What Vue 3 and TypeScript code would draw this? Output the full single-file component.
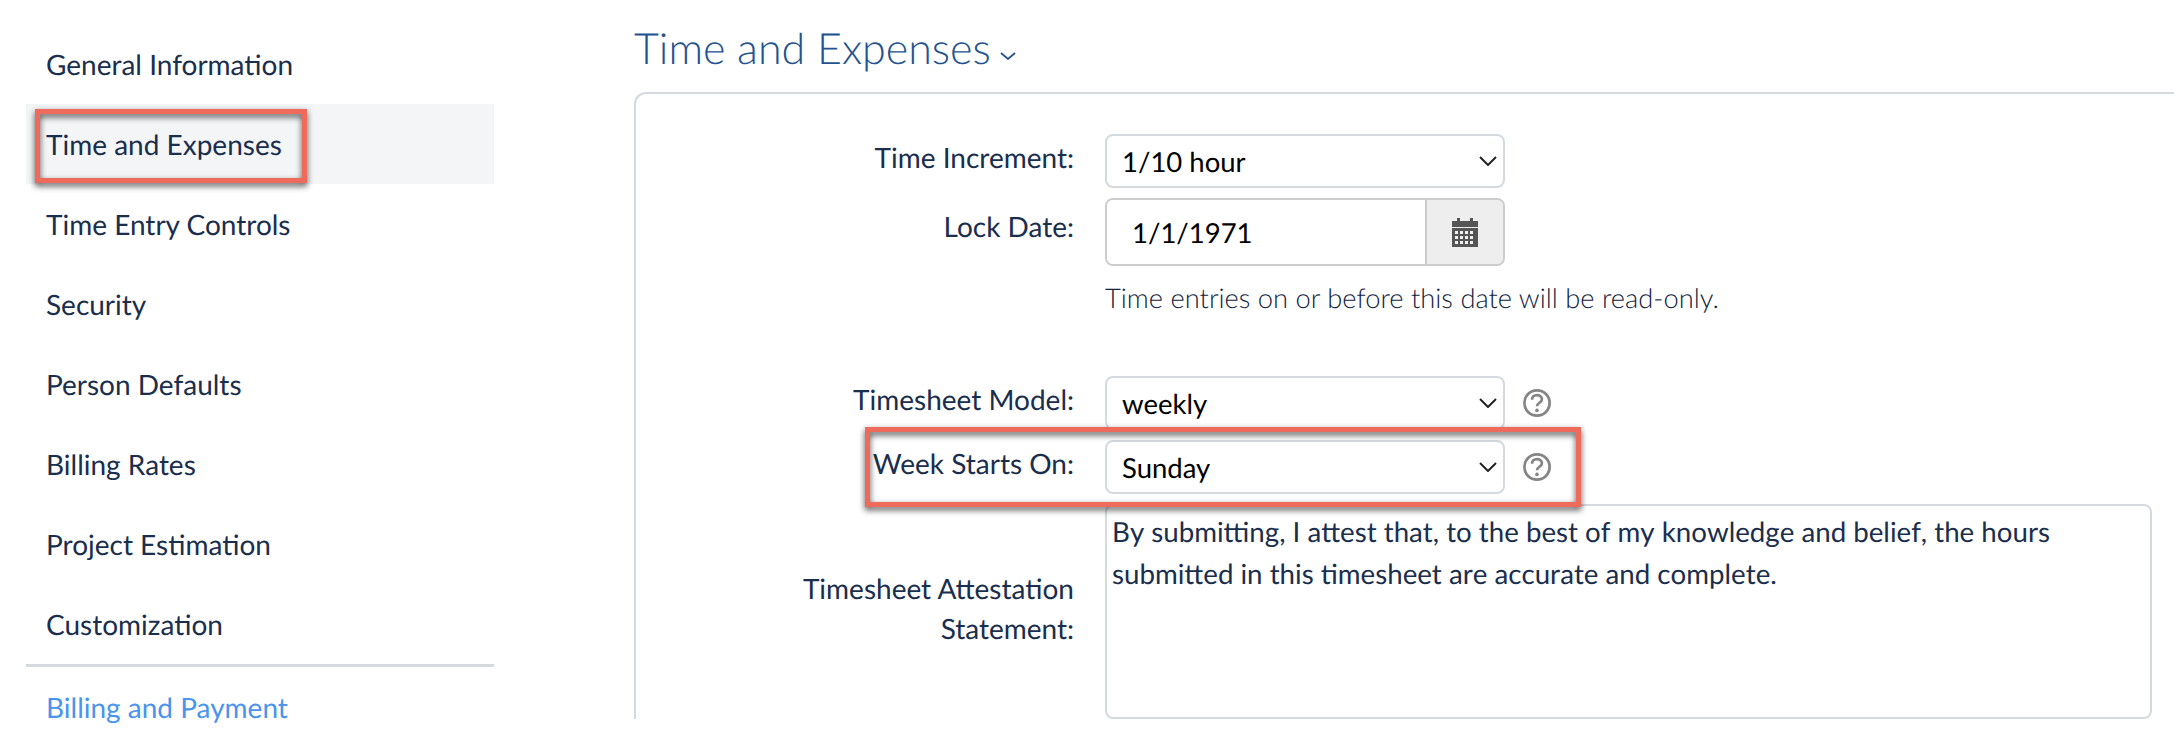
<script setup lang="ts">
const navItems: string[] = [
  'General Information',
  'Time and Expenses',
  'Time Entry Controls',
  'Security',
  'Person Defaults',
  'Billing Rates',
  'Project Estimation',
  'Customization',
]
const attestation =
  'By submitting, I attest that, to the best of my knowledge and belief, the hours submitted in this timesheet are accurate and complete.'
</script>

<template>
  <div class="page">
    <aside class="sidebar">
      <a
        v-for="item in navItems"
        :key="item"
        class="nav-item"
        :class="{ active: item === 'Time and Expenses' }"
      >{{ item }}</a>
      <hr class="divider" />
      <a class="nav-item link">Billing and Payment</a>
    </aside>

    <main class="main">
      <h1 class="title">
        Time and Expenses
        <svg class="title-chevron" viewBox="0 0 16 8" width="16" height="8" aria-hidden="true">
          <path d="M1 1l7 6 7-6" fill="none" stroke="#24538f" stroke-width="1.8" />
        </svg>
      </h1>

      <section class="panel">
        <div class="row">
          <label class="label">Time Increment:</label>
          <div class="select-wrap">
            <select class="select"><option>1/10 hour</option></select>
            <svg class="chevron" viewBox="0 0 18 10" width="18" height="10" aria-hidden="true">
              <path d="M1 1l8 8 8-8" fill="none" stroke="#222" stroke-width="2" />
            </svg>
          </div>
        </div>

        <div class="row date-row">
          <label class="label">Lock Date:</label>
          <div class="date-group">
            <input class="date-input" value="1/1/1971" />
            <span class="addon">
              <svg viewBox="0 0 26 29" width="26" height="29" aria-hidden="true">
                <path fill="#555" d="M5 0h3v3h10V0h3v3h5v6H0V3h5z" />
                <path fill="#555" fill-rule="evenodd" d="M0 10h26v19H0zM3 13v3h3v-3zm5 0v3h3v-3zm5 0v3h3v-3zm5 0v3h3v-3zM3 18v3h3v-3zm5 0v3h3v-3zm5 0v3h3v-3zm5 0v3h3v-3zM3 23v3h3v-3zm5 0v3h3v-3zm5 0v3h3v-3zm5 0v3h3v-3z" />
              </svg>
            </span>
          </div>
        </div>

        <p class="hint">Time entries on or before this date will be read-only.</p>

        <div class="row">
          <label class="label">Timesheet Model:</label>
          <div class="select-wrap">
            <select class="select"><option>weekly</option></select>
            <svg class="chevron" viewBox="0 0 18 10" width="18" height="10" aria-hidden="true">
              <path d="M1 1l8 8 8-8" fill="none" stroke="#222" stroke-width="2" />
            </svg>
          </div>
          <svg class="help" viewBox="0 0 28 28" width="28" height="28" aria-hidden="true">
            <circle cx="14" cy="14" r="12.6" fill="none" stroke="#858585" stroke-width="2.8" />
            <path d="M9 10.8c0-3 2.2-4.7 5-4.7s4.9 1.7 4.9 4.1c0 3.6-4.9 3.5-4.9 7.1" fill="none" stroke="#858585" stroke-width="2.7" />
            <circle cx="14" cy="21.4" r="1.8" fill="#858585" />
          </svg>
        </div>

        <div class="row">
          <label class="label">Week Starts On:</label>
          <div class="select-wrap">
            <select class="select"><option>Sunday</option></select>
            <svg class="chevron" viewBox="0 0 18 10" width="18" height="10" aria-hidden="true">
              <path d="M1 1l8 8 8-8" fill="none" stroke="#222" stroke-width="2" />
            </svg>
          </div>
          <svg class="help" viewBox="0 0 28 28" width="28" height="28" aria-hidden="true">
            <circle cx="14" cy="14" r="12.6" fill="none" stroke="#858585" stroke-width="2.8" />
            <path d="M9 10.8c0-3 2.2-4.7 5-4.7s4.9 1.7 4.9 4.1c0 3.6-4.9 3.5-4.9 7.1" fill="none" stroke="#858585" stroke-width="2.7" />
            <circle cx="14" cy="21.4" r="1.8" fill="#858585" />
          </svg>
        </div>

        <div class="row textarea-row">
          <label class="label multi">Timesheet Attestation Statement:</label>
          <textarea class="textarea" :value="attestation"></textarea>
        </div>
      </section>
    </main>

    <div class="callout callout-nav"></div>
    <div class="callout callout-week"></div>
  </div>
</template>

<style scoped>
.page {
  position: relative;
  display: flex;
  height: 738px;
  overflow: hidden;
  background: #fff;
  font-family: Lato, "Open Sans", sans-serif;
  color: #1a2e4d;
  text-rendering: geometricPrecision;
}
.sidebar {
  flex: none;
  width: 468px;
  margin: 24px 140px 0 26px;
}
.nav-item {
  display: flex;
  align-items: center;
  height: 80px;
  padding-left: 20px;
  font-size: 28px;
}
.nav-item.active {
  background: #f4f5f7;
}
.nav-item.link {
  color: #4a94ee;
}
.divider {
  height: 3px;
  margin: 0;
  border: 0;
  background: #d4d9de;
}
.main {
  flex: 1;
  min-width: 0;
}
.title {
  display: flex;
  align-items: center;
  height: 92px;
  margin: 0;
  padding-top: 5px;
  box-sizing: border-box;
  font-size: 43px;
  font-weight: 300;
  color: #24538f;
}
.title-chevron {
  margin: 14px 0 0 9px;
}
.panel {
  display: flex;
  flex-direction: column;
  gap: 10px;
  padding: 40px 22px 0 0;
  border: 2px solid #d5d9e0;
  border-right: 0;
  border-bottom: 0;
  border-top-left-radius: 12px;
}
.row {
  display: flex;
  align-items: flex-start;
}
.label {
  flex: none;
  width: 438px;
  margin-right: 31px;
  margin-top: 3px;
  font-size: 28px;
  line-height: 40px;
  text-align: right;
}
.date-row .label {
  margin-top: 8px;
}
.select-wrap {
  position: relative;
  width: 400px;
}
.select {
  display: block;
  width: 100%;
  height: 54px;
  padding: 0 15px;
  box-sizing: border-box;
  appearance: none;
  border: 2px solid #d5d9e0;
  border-radius: 8px;
  background: #fff;
  font: 27.5px Lato, sans-serif;
  color: #000;
  text-rendering: geometricPrecision;
}
.chevron {
  position: absolute;
  top: 22px;
  right: 8px;
}
.help {
  margin: 13px 0 0 18px;
}
.date-group {
  display: flex;
  width: 400px;
  height: 68px;
  box-sizing: border-box;
  border: 2px solid #ccc;
  border-radius: 8px;
  overflow: hidden;
}
.date-input {
  flex: 1;
  min-width: 0;
  padding: 0 0 0 25px;
  border: 0;
  outline: 0;
  font: 27.5px Lato, sans-serif;
  color: #000;
  text-rendering: geometricPrecision;
}
.addon {
  flex: none;
  display: flex;
  align-items: center;
  justify-content: center;
  width: 78px;
  box-sizing: border-box;
  border-left: 2px solid #ccc;
  background: #eee;
}
.hint {
  height: 90px;
  margin: 0 0 0 469px;
  padding-top: 2px;
  box-sizing: border-box;
  font-size: 27.3px;
  font-weight: 300;
  line-height: 40px;
  color: #12233d;
}
.textarea-row {
  align-items: center;
}
.label.multi {
  margin-top: 0;
  margin-bottom: 8px;
  padding-left: 100px;
  width: 338px;
}
.textarea {
  flex: 1;
  height: 215px;
  padding: 5px 5px;
  box-sizing: border-box;
  border: 2px solid #d5d9e0;
  border-radius: 8px;
  outline: 0;
  resize: none;
  font: 27.7px/41.6px Lato, sans-serif;
  font-kerning: none;
  color: #1a2e4d;
  text-rendering: geometricPrecision;
}
.callout {
  position: absolute;
  box-sizing: border-box;
  border: 5px solid #ee6a5b;
  filter: drop-shadow(0 3px 3px rgba(0, 0, 0, 0.7));
  pointer-events: none;
}
.callout-nav {
  left: 35px;
  top: 109px;
  width: 272px;
  height: 74px;
}
.callout-week {
  left: 865px;
  top: 427px;
  width: 716px;
  height: 80px;
}
</style>
